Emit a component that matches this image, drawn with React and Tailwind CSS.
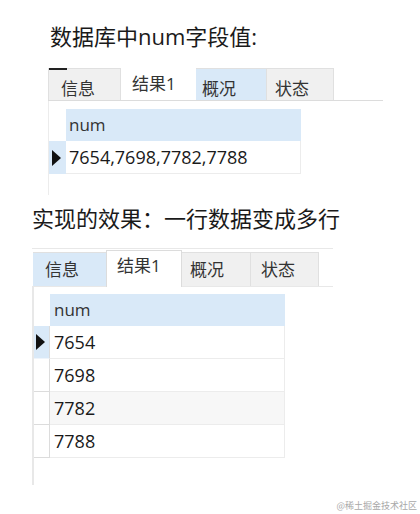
import React from 'react';

const Arrow = () => (
    <svg width="9" height="16" viewBox="0 0 9 16" className="block">
        <polygon points="0,0 9,8 0,16" fill="#111" />
    </svg>
);

const App = () => {
    return (
        <div className="w-[420px] h-[514px] bg-white overflow-hidden font-['Open_Sans','Noto_Sans_CJK_SC',sans-serif] text-[#1a1a1a]">
            <div className="pt-[21px] pl-[50px] h-[52px] text-[22px] leading-[30px]">数据库中num字段值:</div>

            {/* first result panel */}
            <div className="mt-[16px] ml-[48px] w-[335px]">
                <div className="flex h-[33px] border-b border-[#dcdcdc]">
                    <div className="w-[73px] h-full bg-[#f0f0f0] border-l border-t border-r border-[#e0e0e0] pl-3 pt-[9px] text-[17px] leading-[22px] text-[#333] relative">
                        <span className="absolute -top-px left-0 w-[18px] h-[2px] bg-[#222]" />
                        信息
                    </div>
                    <div className="w-[75px] h-full bg-white pl-[11px] pt-[5px] text-[17px] leading-[22px] text-[#333]">结果1</div>
                    <div className="w-[70px] h-full bg-[#d9e9f8] border-t border-[#e0e0e0] pl-[6px] pt-[9px] text-[17px] leading-[22px] text-[#333]">概况</div>
                    <div className="w-[68px] h-full bg-[#f0f0f0] border-t border-r border-l border-[#e0e0e0] pl-[8px] pt-[9px] text-[17px] leading-[22px] text-[#333]">状态</div>
                </div>
                <div className="h-[94px] border-l border-[#ececec] pt-[8px]">
                    <div className="flex h-[32px]">
                        <div className="w-[17px]" />
                        <div className="w-[235px] bg-[#d9e9f8] pl-[3px] pt-[4px] text-[17px] leading-[24px] text-[#333]">num</div>
                    </div>
                    <div className="flex h-[33px]">
                        <div className="w-[17px] bg-[#d9e9f8] flex items-center pl-[3px]">
                            <Arrow />
                        </div>
                        <div className="w-[235px] border-b border-r border-[#ececec] pl-[3px] pt-[3px] text-[18px] leading-[26px]">7654,7698,7782,7788</div>
                    </div>
                </div>
            </div>

            <div className="mt-[8px] pl-[32px] h-[30px] text-[22px] leading-[30px]">实现的效果：一行数据变成多行</div>

            {/* second result panel */}
            <div className="mt-[15px] ml-[32px] w-[301px]">
                <div className="h-[39px] border-t border-b border-[#e8e8e8] flex items-end pl-px">
                    <div className="w-[73px] h-[34px] bg-[#d9e9f8] border-t border-[#e0e0e0] pl-3 pt-[6px] text-[17px] leading-[22px] text-[#333]">信息</div>
                    <div className="w-[76px] h-[37px] -mb-px bg-white border border-b-0 border-[#dcdcdc] z-10 pl-[10px] pt-[4px] text-[17px] leading-[22px] text-[#333]">结果1</div>
                    <div className="w-[69px] h-[34px] bg-[#f0f0f0] border-t border-r border-[#e0e0e0] pl-[8px] pt-[6px] text-[17px] leading-[22px] text-[#333]">概况</div>
                    <div className="w-[68px] h-[34px] bg-[#f0f0f0] border-t border-r border-[#e0e0e0] pl-[10px] pt-[6px] text-[17px] leading-[22px] text-[#333]">状态</div>
                </div>
                <div className="h-[198px] border-l-2 border-[#e8e8e8] pt-[7px]">
                    <div className="flex h-[32px]">
                        <div className="w-[16px]" />
                        <div className="w-[235px] bg-[#d9e9f8] pl-[4px] pt-[4px] text-[17px] leading-[24px] text-[#333]">num</div>
                    </div>
                    {['7654', '7698', '7782', '7788'].map((v, i) => (
                        <div key={v} className="flex h-[33px]">
                            <div className={`w-[16px] border-b border-r border-[#dcdcdc] ${i === 0 ? 'bg-[#d9e9f8] border-b-[#eef4fb] flex items-center pl-[2px]' : 'bg-white'}`}>
                                {i === 0 && <Arrow />}
                            </div>
                            <div className={`w-[235px] border-b border-r border-[#ececec] pl-[4px] pt-[3px] text-[18px] leading-[26px] ${i === 2 ? 'bg-[#f7f7f7]' : 'bg-white'}`}>{v}</div>
                        </div>
                    ))}
                </div>
            </div>

            <div className="mt-[15px] pr-[3px] flex justify-end text-[9px] leading-[12px] text-[#a8a8a8] font-['Noto_Sans_CJK_SC',sans-serif]">@稀土掘金技术社区</div>
        </div>
    );
};

export default App;
